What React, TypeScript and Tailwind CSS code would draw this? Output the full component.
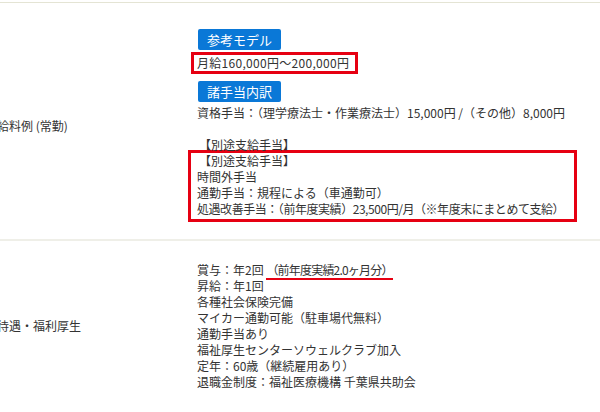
const FONT = "font-['Meiryo','Noto_Sans_CJK_JP',sans-serif]";

const WELFARE_LINES: string[] = [
  "昇給：年1回",
  "各種社会保険完備",
  "マイカー通勤可能（駐車場代無料）",
  "通勤手当あり",
  "福祉厚生センターソウェルクラブ加入",
  "定年：60歳（継続雇用あり）",
  "退職金制度：福祉医療機構 千葉県共助会",
];

const EXTRA_ALLOWANCES: string[] = [
  "【別途支給手当】",
  "時間外手当",
  "通勤手当：規程による（車通勤可）",
  "処遇改善手当：（前年度実績）23,500円/月（※年度末にまとめて支給）",
];

function Badge({ label }: { label: string }) {
  return (
    <div className="ml-[10px] flex h-[21px] w-[83px] items-center justify-center rounded-[2px] bg-[#0a78d7] text-[13px] text-white">
      {label}
    </div>
  );
}

function Row({
  label,
  children,
  className,
}: {
  label: string;
  children: React.ReactNode;
  className: string;
}) {
  return (
    <div className={`flex ${className}`}>
      <div className="-ml-[3px] flex w-[191px] shrink-0 items-center">{label}</div>
      <div className="flex-1">{children}</div>
    </div>
  );
}

export default function App() {
  return (
    <div
      className={`h-[412px] w-[600px] overflow-hidden bg-white text-[12px] leading-4 text-[#333] ${FONT}`}
    >
      <div className="mt-[2px] border-t border-[#e4e4d4]" />

      <Row label="給料例 (常勤)" className="pb-[17px] pt-[26px]">
        <Badge label="参考モデル" />
        <div className="ml-[3px] mt-[2px] inline-block border-[3px] border-[#e60012] pl-[3px] pr-[6px] tracking-[0.3px]">
          月給160,000円～200,000円
        </div>
        <div className="mt-[7px]">
          <Badge label="諸手当内訳" />
        </div>
        <div className="ml-[9px] mt-[3px]">
          資格手当：（理学療法士・作業療法士）15,000円 /（その他）8,000円
        </div>
        <div className="h-4" />
        <div className="ml-[11px]">【別途支給手当】</div>
        <div className="-mt-[3px] w-[389px] border-[3px] border-[#e60012] pb-[2px] pl-[6px]">
          {EXTRA_ALLOWANCES.map((line, i) => (
            <div
              key={line}
              className={`whitespace-nowrap ${i === 0 ? "ml-[2px]" : ""} ${
                i === 3 ? "tracking-[-0.45px]" : ""
              }`}
            >
              {line}
            </div>
          ))}
        </div>
      </Row>

      <div className="border-t-2 border-[#efefe8]" />

      <Row label="待遇・福利厚生" className="pb-[22px] pt-[21px]">
        <div className="ml-[9px]">
          <div>
            賞与：年2回{" "}
            <span className="border-b-2 border-[#e60012] tracking-[-0.8px]">
              （前年度実績2.0ヶ月分）
            </span>
          </div>
          {WELFARE_LINES.map((line) => (
            <div key={line}>{line}</div>
          ))}
        </div>
      </Row>
    </div>
  );
}
